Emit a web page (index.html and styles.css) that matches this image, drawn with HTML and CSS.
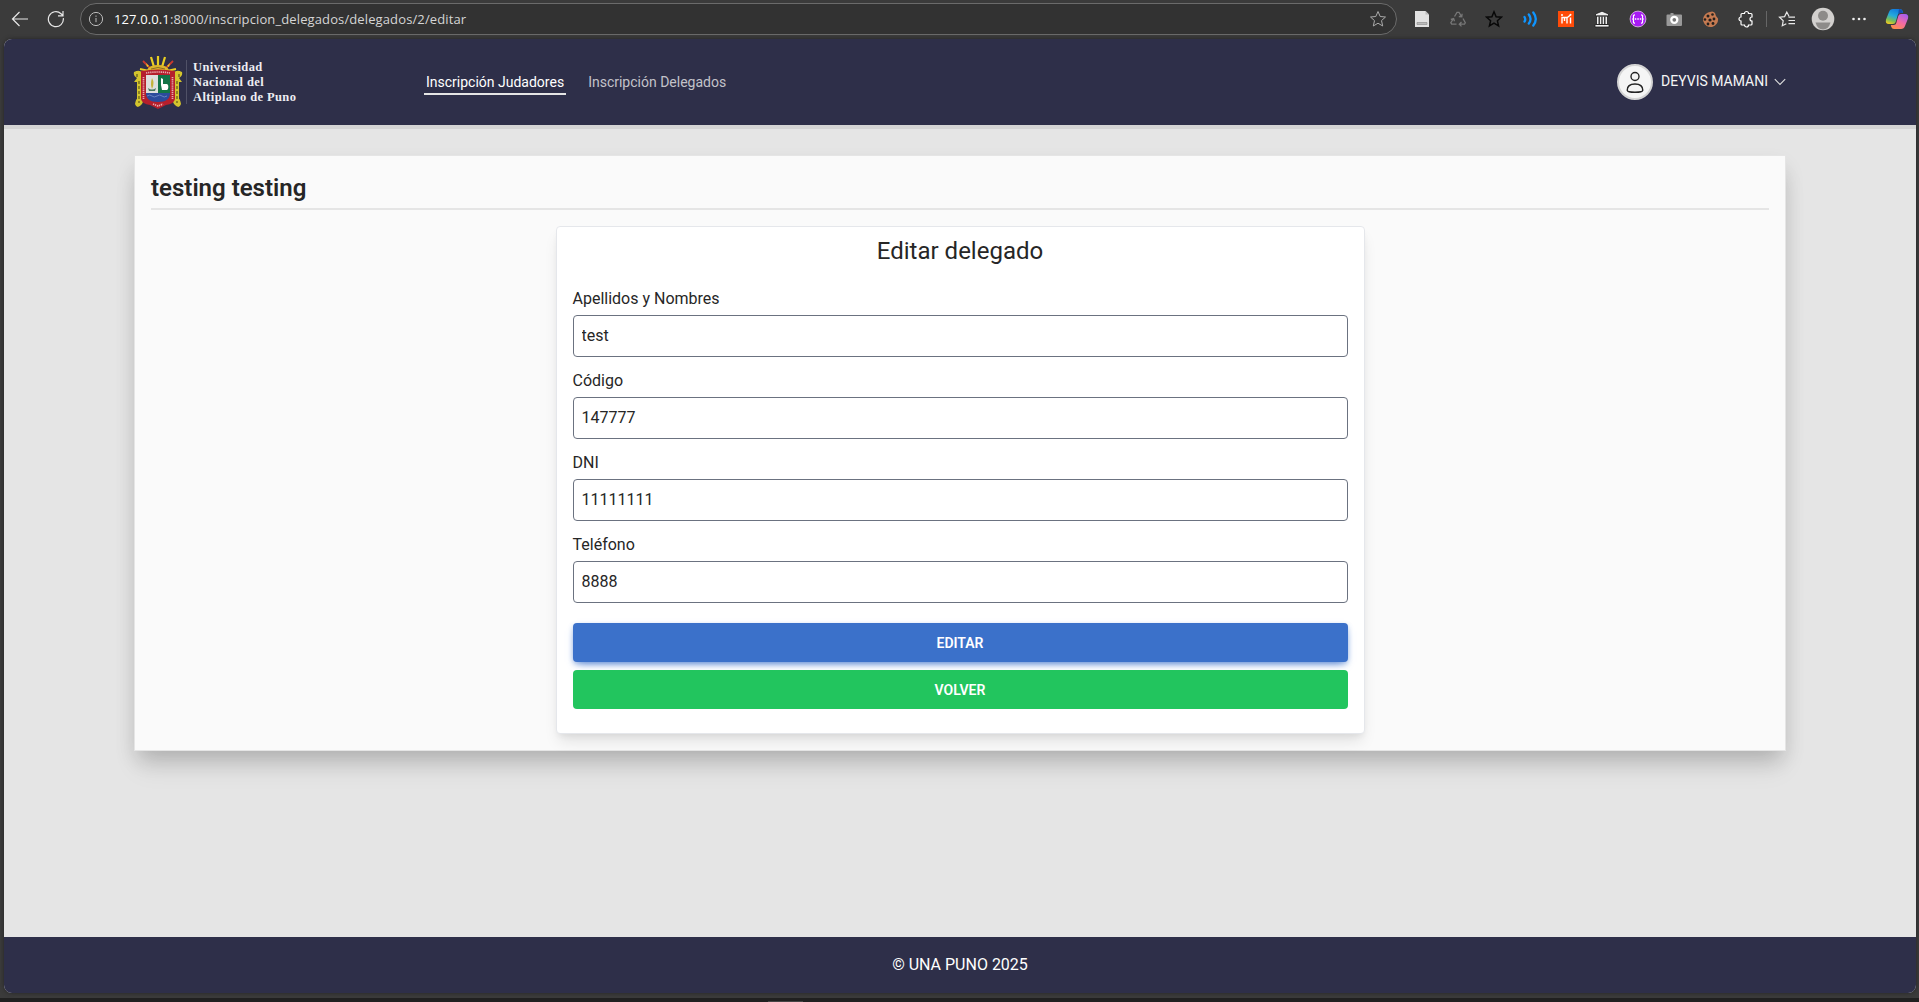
FILE: index.html
```html
<!DOCTYPE html>
<html lang="es">
<head>
<meta charset="utf-8">
<title>Editar delegado</title>
<link rel="stylesheet" href="styles.css">
</head>
<body>
<div class="toolbar">
  <svg class="ic back" width="18" height="18" viewBox="0 0 18 18"><path d="M17 9H2M8.5 2 1.5 9l7 7"/></svg>
  <svg class="ic reload" width="18" height="18" viewBox="0 0 18 18"><path d="M16.3 8.2A7.5 7.5 0 1 1 14 3.7L16 5.5M16 1v4.8h-5"/></svg>
  <div class="address">
    <svg class="ic info" width="16" height="16" viewBox="0 0 16 16"><circle cx="8" cy="8" r="6.6"/><path d="M8 7v4.2M8 4.5v1.3"/></svg>
    <span class="url"><b>127.0.0.1</b>:8000/inscripcion_delegados/delegados/2/editar</span>
    <svg class="ic fav" width="18" height="18" viewBox="0 0 18 18"><path d="m9 1.5 2.2 5 5.3.5-4 3.6 1.2 5.4L9 13.2 4.300 16l1.200-5.400-4-3.600 5.300-.5Z"/></svg>
  </div>
  <div class="extensions">
    <svg width="18" height="18" viewBox="0 0 18 18"><path d="M2 1h10.500l3.500 3.500V17H2z" fill="#e2e2e2"/><path d="M12.500 1v3.500H16" fill="#bbb"/><path d="M4 12.500h10v2H4z" fill="#bbb" stroke="#888" stroke-width=".6"/></svg>
    <svg width="18" height="18" viewBox="0 0 18 18" fill="none" stroke="#777" stroke-width="1.300"><path d="M5.500 6.500 8 2.300h2l2.500 4.200M9.800 6.500l3 .2.300-3M14 8.500l2.300 4.200-.8 1.500h-5M12.500 12l-2.200 2.200 2.200 2.200M7.500 14.200H2.700l-.9-1.500L4.300 8.800M1.800 9.300l2.800-.8.900 2.800"/></svg>
    <svg width="18" height="18" viewBox="0 0 18 18" fill="none" stroke="#080808" stroke-width="1.500"><path d="m9 1.800 2.100 5 5.300.4-4 3.600 1.200 5.200L9 13.200 4.400 16l1.200-5.200-4-3.600 5.300-.4Z"/></svg>
    <svg width="18" height="18" viewBox="0 0 18 18" fill="none" stroke="#0f95ff" stroke-width="2.300" stroke-linecap="round"><path d="M3.500 7q1.500 2.500 0 4.500M7.800 4.500q3.500 4.500 0 9M12.300 2.500q5 6.500 0 13"/></svg>
    <svg width="18" height="18" viewBox="0 0 18 18"><path d="M1 1h16v16H1z" fill="#ff4b08"/><path d="M5 13.500V7.500H10V13.500M13.500 13.500V7.500M10 7.800 13.500 5M7.500 8v3" fill="none" stroke="#fff" stroke-width="1.400"/><circle cx="5" cy="5" r="1" fill="#fff"/><circle cx="13.500" cy="4.800" r="1" fill="#fff"/></svg>
    <svg width="18" height="18" viewBox="0 0 18 18" fill="#eee" stroke="#1f1f1f" stroke-width=".8"><path d="M9 1.200 15.500 4V6h-13V4zM3.500 6h11v8.500h-11zM2 14.500h14V17H2z"/><path d="M6.200 6.500v8M9 6.500v8M11.800 6.500v8" stroke-width="1.300"/></svg>
    <svg width="18" height="18" viewBox="0 0 18 18"><circle cx="9" cy="9" r="7.900" fill="#a81af5" stroke="#cfa6dd"/><path d="M6 4.800q-2 0-1.500 2.500.2 1.700-1.300 1.700 1.500 0 1.300 1.700-.5 2.500 1.500 2.500M12 4.800q2 0 1.500 2.500-.2 1.700 1.300 1.700-1.500 0-1.300 1.700.5 2.500-1.500 2.500" fill="none" stroke="#fff" stroke-width="1.200"/><path d="M5.800 9h6.600" stroke="#fff" stroke-width="1.500" stroke-dasharray="1.500 1"/></svg>
    <svg width="18" height="18" viewBox="0 0 18 18"><path d="M5.500 4.500V3h3v1.500H16q1 0 1 1V15q0 1-1 1H2.500q-1 0-1-1V5.500q0-1 1-1z" fill="#999"/><circle cx="9.300" cy="9.800" r="3" fill="#777" stroke="#fff" stroke-width="2.300"/></svg>
    <svg width="18" height="18" viewBox="0 0 18 18"><path d="M9 2q3-1.500 5 1l1 3 2 2.500a7.500 7.500 0 1 1-10-6z" fill="#c57a51"/><g fill="#24201e"><circle cx="7" cy="6" r="1.500"/><circle cx="11.500" cy="4.500" r="1.300"/><circle cx="4" cy="9.500" r="1.300"/><circle cx="9" cy="10" r="1.600"/><circle cx="13" cy="9" r="1.400"/><circle cx="7" cy="14" r="1.400"/><circle cx="12" cy="13.500" r="1.400"/></g></svg>
    <svg width="18" height="18" viewBox="0 0 18 18" fill="none" stroke="#fff" stroke-width="1.200"><path d="M5 3.500h2.500a2 2 0 0 1 4 0H14q1 0 1 1V7a2 2 0 0 0 0 4v3q0 1-1 1h-2.500a2 2 0 0 1-4 0H5q-1 0-1-1V11a2 2 0 0 1 0-4V4.500q0-1 1-1Z"/></svg>
  </div>
  <i class="sep"></i>
  <svg class="ic collections" width="18" height="18" viewBox="0 0 18 18"><path d="M11 6.200 8.800 2 6.600 6.600 1.500 7.200l3.700 3.600-.9 5 4-2M10.500 7.200H17M10.500 10.500H17M10.500 13.700H17"/></svg>
  <svg class="profile" width="24" height="24" viewBox="0 0 24 24"><circle cx="12" cy="12" r="11.300" fill="#d2d0ce"/><circle cx="12" cy="8.700" r="5" fill="#8d8b89"/><path d="M4.500 15.500h15q-2 7-7.500 7t-7.500-7" fill="#8d8b89"/></svg>
  <svg class="more" width="16" height="4" viewBox="0 0 16 4" fill="#eee"><circle cx="2.500" cy="2" r="1.300"/><circle cx="8" cy="2" r="1.300"/><circle cx="13.500" cy="2" r="1.300"/></svg>
  <svg class="copilot" width="24" height="22" viewBox="0 0 24 22">
    <defs><linearGradient id="cool" x1=".6" y1="0" x2=".2" y2="1"><stop offset="0" stop-color="#1179dd"/><stop offset=".45" stop-color="#25aadd"/><stop offset=".75" stop-color="#77bd58"/><stop offset="1" stop-color="#f3ca20"/></linearGradient><linearGradient id="warm" x1=".8" y1="0" x2=".2" y2="1"><stop offset="0" stop-color="#a75df0"/><stop offset=".5" stop-color="#f36aa4"/><stop offset="1" stop-color="#ff8f48"/></linearGradient></defs>
    <path d="M8 1h7q2 0 2.700 2l.5 2h-3q-2 0-2.500 2l-2 7q-.7 2-2.700 2H4q-4 0-3-4.500L4 4q1-3 4-3" fill="url(#cool)"/>
    <path d="M16 21H9q-2 0-2.700-2l-.5-2h3q2 0 2.500-2l2-7q.7-2 2.700-2h4q4 0 3 4.500L20 18q-1 3-4 3" fill="url(#warm)"/><path d="M14 1q3 0 4 4h-3q-1.500 0-2 1.500z" fill="#194eb1"/>
  </svg>
</div>

<div class="viewport">
  <header class="header">
    <div class="brand">
      <svg class="crest" width="50" height="54" viewBox="0 0 50 54">
        <g stroke="#e9cf22" stroke-width="2.200"><path d="M25 1v11M18 2l3 10M32 2l-3 10M7 14l9 2M43 14l-9 2"/></g>
        <g stroke="#c93a2e" stroke-width="1.800"><path d="m10 6 8 8M40 6l-8 8"/></g>
        <path d="m13 8 3 3-2 1zM37 8l-3 3 2 1z" fill="#e9cf22"/>
        <path d="M14 15q2-5 11-5t11 5z" fill="#dcb62b"/><path d="M18 14q7-3 14 0" fill="none" stroke="#8c6b21"/>
        <path d="M1 17q6-3 8 1v26q2 2 0 5-5 6-7 0 1-5 2-5V27H1l3-4q-4-2-3-6M49 17q-6-3-8 1v26q-2 2 0 5 5 6 7 0-1-5-2-5V27h3l-3-4q4-2 3-6" fill="#d4c52d"/>
        <path d="M4 19v3M6 26v22M46 19v3M44 26v22" stroke="#6f671d" stroke-width="1.400" stroke-dasharray="3 2"/>
        <path d="M8 16q17-3 34 0v28q-1 5-9 6l-8 4-8-4q-8-1-9-6z" fill="#b51f2c"/>
        <path d="M13 20h12v19H13z" fill="#dedfdd"/><path d="M25 20h12v19H25z" fill="#137447"/>
        <path d="M13 38h24q0 9-12 9t-12-9" fill="#2b4b9c"/><path d="M14 41q3-2 5 0t5 0 5 0 5 0" fill="none" stroke="#6681c1"/>
        <path d="M19 23q3 5 0 11-2-5 0-11" fill="#c4b338"/><path d="M15 33q4 3 8 0l-1 3h-6z" fill="#47785b"/>
        <path d="M28 23l2 1v5h4q2 1 1 5l-1 1h-5l-1-5z" fill="#fff"/>
        <g stroke="#e7aab0" stroke-width="1.700" stroke-dasharray="1.300 .8" fill="none"><path d="M13 18q12-2 24 0M10.500 22v22M39.500 22v22M20 49l5 2 5-2"/></g>
      </svg>
      <div class="brand-name">Universidad<br>Nacional del<br><span>Altiplano de Puno</span></div>
    </div>
    <nav class="nav"><a class="active">Inscripción Judadores</a><a>Inscripción Delegados</a></nav>
    <div class="user">
      <span class="avatar"><svg width="20" height="24" viewBox="0 0 20 24" fill="none" stroke="#242424" stroke-width="1.400"><circle cx="10" cy="6.500" r="4"/><path d="M2.200 20.300Q2.200 14 10 14t7.800 6.300q.1 2-7.800 2t-7.800-2Z"/></svg></span>
      <span class="user-name">DEYVIS MAMANI</span>
      <svg class="chevron" width="12" height="8" viewBox="0 0 12 8" fill="none" stroke="#ddd" stroke-width="1.100"><path d="m.8 1.200 5.200 5.300 5.200-5.300"/></svg>
    </div>
  </header>
  <main class="main">
    <section class="panel">
      <h1>testing testing</h1>
      <form class="card">
        <h2>Editar delegado</h2>
        <label>Apellidos y Nombres<input value="test"></label>
        <label>Código<input value="147777"></label>
        <label>DNI<input value="11111111"></label>
        <label>Teléfono<input value="8888"></label>
        <button class="primary" type="button">EDITAR</button>
        <button class="success" type="button">VOLVER</button>
      </form>
    </section>
  </main>
  <footer class="footer">© UNA PUNO 2025</footer>
</div>
<div class="taskbar"><i></i></div>
</body>
</html>
```
FILE: styles.css
```css
* { box-sizing: border-box; }
body { margin: 0; height: 1002px; overflow: hidden; display: flex; flex-direction: column; background: #3b3b3b; font: 16px/24px Roboto, sans-serif; color: #262626; }
svg { display: block; flex: none; }

/* Browser toolbar */
.toolbar { height: 39px; flex: none; display: flex; align-items: center; padding: 0 10px 1px 11px; }
.ic { fill: none; stroke: #e8e8e8; stroke-width: 1.2; }
.reload { margin-left: 18px; }
.address { width: 1319px; height: 32px; margin-left: 15px; padding: 0 9px 0 7px; display: flex; align-items: center; border: 1px solid #6b6b6b; border-radius: 16px; background: #323232; }
.address .info { stroke: #bbb; stroke-width: 1; }
.url { margin-left: 10px; width: 360px; white-space: nowrap; font: 13px/20px "Open Sans", sans-serif; letter-spacing: .12px; color: #d5d5d5; }
.url b { font-weight: 400; color: #fff; }
.fav { margin-left: auto; stroke: #aaa; stroke-width: 1; }
.extensions { display: flex; gap: 18px; margin-left: 16px; }
.sep { width: 1px; height: 16px; margin-left: 11px; background: #666; }
.collections { margin-left: 11px; }
.profile { margin-left: 15px; }
.more { margin-left: 16px; }
.copilot { margin-left: 18px; }

/* Page */
.viewport { height: 954px; flex: none; margin: 0 3px 0 4px; display: flex; flex-direction: column; overflow: hidden; border-radius: 8px; background: #e5e5e5; box-shadow: 0 0 4px #252525; }
.header { height: 90px; flex: none; padding: 0 130px 0 129px; display: flex; align-items: center; background: #2e2f49; border-bottom: 4px solid #d4d4d4; }
.crest { margin-top: -1px; }
.brand { width: 291px; display: flex; align-items: center; }
.brand-name { height: 44px; margin: -1px 0 0 3px; padding-left: 6px; border-left: 1px solid #505167; white-space: nowrap; font: bold 12.5px/15px "Liberation Serif", serif; letter-spacing: .4px; color: #ededf2; }
.nav { display: flex; gap: 20px; margin-top: 3px; font-size: 14px; line-height: 21px; color: #c3c3c9; }
.nav a { height: 23px; padding: 0 2px; }
.nav .active { color: #fff; border-bottom: 2px solid #e5e5e5; }
.user { margin-left: auto; display: flex; align-items: center; color: #f5f5f5; font-size: 14px; }
.avatar { width: 36px; height: 36px; display: flex; align-items: center; justify-content: center; border: 2px solid #d4d4d4; border-radius: 50%; background: #f5f5f5; }
.user-name { margin: -2px 0 0 8px; }
.chevron { margin-left: 6px; }
.main { flex: 1; padding-top: 26px; }
.panel { width: 1652px; height: 596px; margin: 0 auto; padding: 16px; border: 1px solid #e5e5e5; background: #fafafa; box-shadow: 0 20px 25px -5px rgba(0,0,0,.1), 0 10px 20px -3px rgba(0,0,0,.16); }
h1 { margin: 0 0 16px; height: 38px; border-bottom: 2px solid #e5e5e5; font-size: 24px; line-height: 32px; font-weight: 600; }
.card { width: 50%; height: 508px; margin: 0 auto; padding: 8px 16px; border: 1px solid #e5e7eb; border-radius: 4px; background: #fff; box-shadow: 0 10px 15px -3px rgba(0,0,0,.1), 0 4px 6px -2px rgba(0,0,0,.06); }
h2 { margin: 0 0 20px; font-size: 24px; line-height: 32px; font-weight: 400; text-align: center; }
label { display: block; margin-bottom: 12px; }
input { display: block; width: 100%; height: 42px; margin-top: 4px; padding: 7px 8px 9px; border: 1px solid #6b7280; border-radius: 4px; background: #fff; color: #262626; font: inherit; }
button { display: block; width: 100%; height: 39px; padding: 0; border: 0; border-radius: 4px; color: #fff; font: 600 14px/20px Roboto, sans-serif; }
.primary { margin-top: 20px; background: #3b71ca; box-shadow: 0 4px 9px -4px #3b71ca, 0 2px 5px rgba(59,113,202,.3); }
.success { margin-top: 8px; background: #22c55e; }
.footer { height: 56px; flex: none; padding-top: 16px; background: #2e2f49; color: #fff; text-align: center; }
.taskbar { height: 4px; margin-top: 5px; display: flex; align-items: flex-end; padding-left: 768px; background: #202020; }
.taskbar i { width: 35px; height: 1px; background: #454545; }
```
